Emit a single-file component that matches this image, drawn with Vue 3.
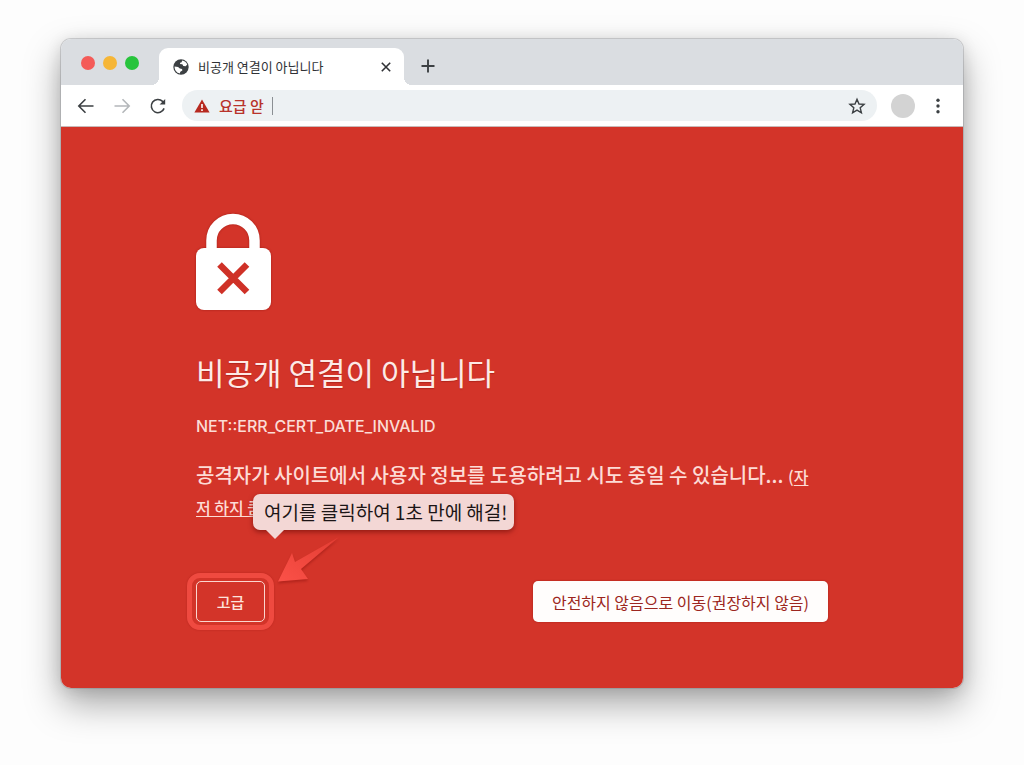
<script setup>
const tabTitle = '비공개 연결이 아닙니다'
</script>

<template>
  <div class="desktop">
    <div class="window">
      <header class="tab-strip">
        <div class="lights">
          <button class="light close" aria-label="닫기"></button>
          <button class="light minimize" aria-label="최소화"></button>
          <button class="light maximize" aria-label="최대화"></button>
        </div>
        <div class="tab">
          <svg class="globe" viewBox="0 0 24 24" width="20" height="20" aria-hidden="true">
            <circle cx="12" cy="12" r="9.2" fill="#3c4043" />
            <path fill="#fff" d="M13.2 4.3c3 .4 5.300 2.100 6.300 4.600l-1.900 2.300-2.800-.5-1.200-2.100-3-.2.800-1.700 1.500-.5zM4.300 11.500l4.200.6 2.100 1.700 2.700.6.300 1.800-2.400 1.500-.7 2.100C7 19.200 4.100 15.800 4.300 11.500z" />
          </svg>
          <span class="tab-title">{{ tabTitle }}</span>
          <button class="icon-button tab-close" aria-label="탭 닫기">
            <svg viewBox="0 0 12 12" width="12" height="12"><path d="M1.800 1.800l8.400 8.400M10.200 1.800l-8.400 8.400" fill="none" stroke="#303236" stroke-width="1.600" /></svg>
          </button>
        </div>
        <button class="icon-button new-tab" aria-label="새 탭">
          <svg viewBox="0 0 16 16" width="16" height="16"><path d="M8 1.500v13M1.500 8h13" fill="none" stroke="#3c4043" stroke-width="1.900" /></svg>
        </button>
      </header>

      <nav class="toolbar">
        <button class="icon-button" aria-label="뒤로">
          <svg viewBox="0 0 18 18" width="18" height="18"><path d="M16.500 9H2M8.500 2.300L1.800 9l6.700 6.700" fill="none" stroke="#3c4043" stroke-width="1.600" /></svg>
        </button>
        <button class="icon-button" aria-label="앞으로">
          <svg viewBox="0 0 18 18" width="18" height="18"><path d="M1.500 9H16M9.500 2.300L16.200 9l-6.700 6.700" fill="none" stroke="#b4b7ba" stroke-width="1.600" /></svg>
        </button>
        <button class="icon-button" aria-label="새로고침">
          <svg viewBox="0 0 18 18" width="18" height="18"><path d="M15.100 11.400A6.600 6.600 0 1 1 13.600 4.400L15 6" fill="none" stroke="#3c4043" stroke-width="1.600" /><path d="M16.200 2v5.600h-5.600z" fill="#3c4043" /></svg>
        </button>
        <div class="address">
          <svg viewBox="0 0 16 14" width="16" height="14" aria-hidden="true"><path d="M8 .4L15.600 13.600H.4z" fill="#b7291f" /><path d="M7.200 5h1.600v4H7.200zM7.200 10.300h1.600v1.700H7.200z" fill="#fff" /></svg>
          <label class="address-label" for="address">요급 앋</label>
          <input id="address" class="address-input" type="text" />
          <button class="icon-button" aria-label="북마크">
            <svg viewBox="0 0 18 18" width="18" height="18"><path d="M9 2.200l2 4.800 5.100.4-3.900 3.400 1.200 5L9 13.100l-4.400 2.700 1.200-5-3.900-3.400L7 7z" fill="none" stroke="#3c4043" stroke-width="1.400" /></svg>
          </button>
        </div>
        <button class="avatar" aria-label="프로필"></button>
        <button class="icon-button menu" aria-label="메뉴">
          <svg viewBox="0 0 4 18" width="4" height="18"><g fill="#3c4043"><circle cx="2" cy="3.200" r="1.700" /><circle cx="2" cy="9" r="1.700" /><circle cx="2" cy="14.800" r="1.700" /></g></svg>
        </button>
      </nav>

      <main class="page">
        <svg class="lock" viewBox="0 0 76 98" width="76" height="98" aria-hidden="true">
          <path d="M15.500 42V27.500a21.500 21.500 0 0 1 43 0V42" fill="none" stroke="#fff" stroke-width="10.500" />
          <rect x="0" y="35" width="75" height="62" rx="8" fill="#fff" />
          <path d="M23.500 51.500L51 79M51 51.500L23.500 79" fill="none" stroke="#cf3127" stroke-width="6.500" />
        </svg>
        <h1>비공개 연결이 아닙니다</h1>
        <p class="code">NET::ERR_CERT_DATE_INVALID</p>
        <div class="message">
          <p>공격자가 사이트에서 사용자 정보를 도용하려고 시도 중일 수 있습니다... <span class="more">(<a href="#">자<br />저 하지 쿰</a></span></p>
          <div class="tooltip" role="tooltip">여기를 클릭하여 1초 만에 해걸!</div>
        </div>
        <div class="actions">
          <div class="highlight">
            <button class="advanced">고급</button>
            <svg class="pointer" viewBox="0 0 64 50" width="64" height="50" aria-hidden="true">
              <defs><linearGradient id="arrow" x1="1" y1="0" x2="0" y2="1"><stop offset="0" stop-color="#e33d33" /><stop offset="1" stop-color="#fb5148" /></linearGradient></defs>
              <path d="M63 2L19 27 16 18 2 46.500 32 44 25 34z" fill="url(#arrow)" />
            </svg>
          </div>
          <button class="proceed">안전하지 않음으로 이동(권장하지 않음)</button>
        </div>
      </main>
    </div>
  </div>
</template>

<style>
body {
  margin: 0;
  background: #fdfdfd;
}
</style>

<style scoped>
* {
  box-sizing: border-box;
}
.desktop {
  padding: 39px 61px 77px;
  font-family: "Noto Sans CJK KR", sans-serif;
}
button {
  font: inherit;
  padding: 0;
  border: 0;
}
svg {
  display: block;
}
.window {
  border-radius: 10px;
  background: #fff;
  overflow: hidden;
  box-shadow: 0 0 0 1px rgba(120, 124, 128, 0.3), 0 16px 36px rgba(0, 0, 0, 0.34), 0 2px 16px rgba(0, 0, 0, 0.12);
}
.tab-strip {
  display: flex;
  align-items: flex-end;
  height: 46px;
  background: #dadde1;
}
.lights {
  display: flex;
  gap: 8px;
  padding: 0 20px 15px;
  width: 98px;
}
.light {
  flex: none;
  width: 14px;
  height: 14px;
  border-radius: 50%;
}
.close { background: #f45b58; }
.minimize { background: #f6b637; }
.maximize { background: #27c43c; }
.tab {
  position: relative;
  display: flex;
  align-items: center;
  width: 245px;
  height: 37px;
  padding: 0 12px;
  border-radius: 9px 9px 0 0;
  background: #fff;
}
.tab::before,
.tab::after {
  content: "";
  position: absolute;
  bottom: 0;
  width: 8px;
  height: 8px;
}
.tab::before {
  right: 100%;
  background: radial-gradient(circle at 0 0, #dadde1 8px, #fff 8px);
}
.tab::after {
  left: 100%;
  background: radial-gradient(circle at 100% 0, #dadde1 8px, #fff 8px);
}
.tab-title {
  margin-left: 7px;
  font-size: 13px;
  line-height: 20px;
  color: #303236;
}
.icon-button {
  flex: none;
  background: none;
}
.tab-close {
  margin-left: auto;
}
.new-tab {
  margin: 0 0 11px 16px;
}
.toolbar {
  display: flex;
  align-items: center;
  gap: 18px;
  height: 42px;
  padding: 0 23px 0 16px;
  border-bottom: 1px solid #c9b9b8;
}
.address {
  display: flex;
  flex: 1;
  align-items: center;
  height: 31px;
  margin-left: -3px;
  padding: 0 11px 0 12px;
  border-radius: 16px;
  background: #edf1f3;
}
.address-label {
  margin-left: 9px;
  font-size: 15px;
  line-height: 22px;
  font-weight: 500;
  color: #b8332b;
}
.address-input {
  flex: 1;
  min-width: 0;
  height: 18px;
  margin-left: 8px;
  padding: 0 8px;
  border: 0;
  border-left: 1px solid #8b8f93;
  outline: 0;
  background: none;
  font: inherit;
}
.avatar {
  width: 24px;
  height: 24px;
  margin: 0 3px 0 -4px;
  border-radius: 50%;
  background: #d3d3d3;
}
.page {
  padding: 86px 135px 58px;
  background: #d33429;
  color: #fdeae6;
}
.lock {
  filter: drop-shadow(0 0 1px rgba(120, 10, 5, 0.5));
}
h1 {
  margin: 37px 0 0;
  font-size: 31px;
  line-height: 48px;
  font-weight: 400;
  text-shadow: 0 1px 1px rgba(120, 10, 5, 0.35);
}
.code {
  margin: 18px 0 0;
  font-family: Inter, sans-serif;
  font-size: 16px;
  line-height: 24px;
  font-weight: 500;
  color: #fbdcd6;
}
.message {
  position: relative;
  margin-top: 22px;
}
.message p {
  margin: 0;
  font-size: 20px;
  line-height: 29px;
  font-weight: 500;
  color: #fddcd6;
  white-space: nowrap;
}
.more {
  font-size: 16px;
}
.more a {
  color: inherit;
  text-underline-offset: 2px;
}
.tooltip {
  position: absolute;
  z-index: 1;
  top: 34px;
  left: 57px;
  padding: 0 7px 0 11px;
  border-radius: 7px;
  background: #f3d7d5;
  box-shadow: 0 2px 5px rgba(90, 5, 0, 0.55);
  font-size: 19px;
  line-height: 36px;
  color: #1c1516;
  white-space: nowrap;
}
.tooltip::after {
  content: "";
  position: absolute;
  top: 100%;
  left: 13px;
  border: 9px solid transparent;
  border-top-color: #f3d7d5;
  border-bottom: 0;
}
.actions {
  display: flex;
  align-items: center;
  justify-content: space-between;
  margin: 51px 0 0 -9px;
}
.highlight {
  position: relative;
  padding: 3px 4px;
  border: 5px solid #ef4a40;
  border-radius: 13px;
  box-shadow: 0 0 2px rgba(120, 10, 5, 0.3);
}
.advanced {
  display: block;
  width: 69px;
  height: 41px;
  border: 1px solid #fbd6cf;
  border-radius: 5px;
  background: none;
  color: #fde2dc;
  font-size: 15px;
  font-weight: 500;
}
.pointer {
  position: absolute;
  left: 84px;
  bottom: 40px;
  filter: drop-shadow(0 2px 1px rgba(120, 10, 5, 0.35));
}
.proceed {
  height: 41px;
  padding: 0 19px;
  border-radius: 5px;
  background: #fffdfc;
  box-shadow: 0 0 2px rgba(120, 10, 5, 0.5);
  color: #9c2620;
  font-size: 16px;
}
</style>
